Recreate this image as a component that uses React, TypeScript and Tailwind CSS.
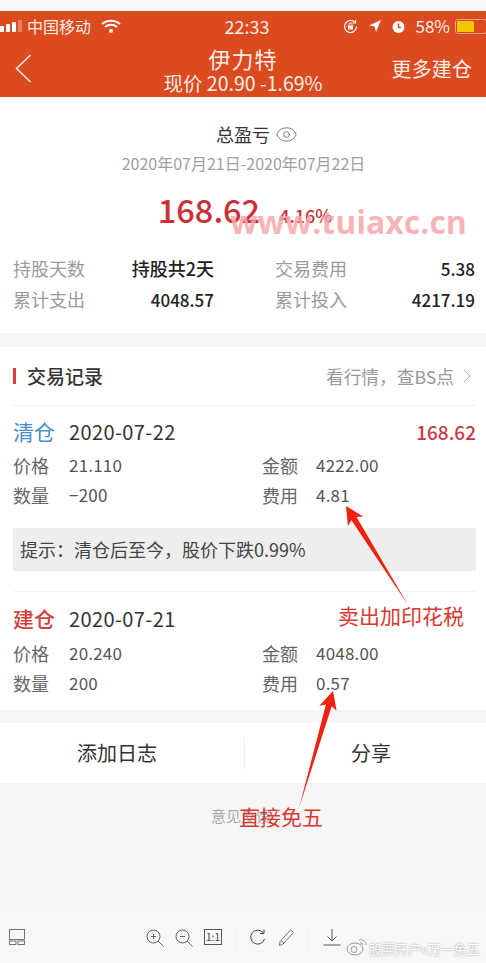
import React from "react";
import { Eye, ChevronRight } from "lucide-react";

const font = { fontFamily: '"Noto Sans CJK SC", "Noto Sans", sans-serif' };

function Stat({ label, value, valueClass = "text-[17px]" }: { label: string; value: string; valueClass?: string }) {
  return (
    <div className="flex items-center justify-between h-[31px]">
      <span className="text-[18px] text-[#9a9a9a]">{label}</span>
      <span className={`font-medium text-[#222] ${valueClass}`}>{value}</span>
    </div>
  );
}

function Cell({ label, value, labelClass }: { label: string; value: string; labelClass: string }) {
  return (
    <div className="flex items-center h-[30px]">
      <span className={`text-[18px] text-[#666] ${labelClass}`}>{label}</span>
      <span className="text-[17px] tracking-[0.2px] text-[#555]">{value}</span>
    </div>
  );
}

function Trade({ kind, kindClass, date, rows, profit, rowsClass = "" }: { kind: string; kindClass: string; date: string; rows: [string, string, string, string][]; profit?: string; rowsClass?: string }) {
  return (
    <div>
      <div className="flex items-center justify-between h-[36px]">
        <div className="flex items-center">
          <span className={`w-[56px] text-[21px] ${kindClass}`}>{kind}</span>
          <span className="text-[20px] tracking-[0.4px] text-[#333]">{date}</span>
        </div>
        {profit && <span className="text-[19px] font-medium text-[#c93a46]">{profit}</span>}
      </div>
      <div className={rowsClass}>
        {rows.map((r) => (
          <div key={r[0]} className="grid grid-cols-[249px_1fr]">
            <Cell label={r[0]} value={r[1]} labelClass="w-[56px]" />
            <Cell label={r[2]} value={r[3]} labelClass="w-[54px]" />
          </div>
        ))}
      </div>
    </div>
  );
}

function Arrow({ x1, y1, x2, y2 }: { x1: number; y1: number; x2: number; y2: number }) {
  const dx = x2 - x1, dy = y2 - y1;
  const len = Math.hypot(dx, dy);
  const ux = dx / len, uy = dy / len, px = -uy, py = ux;
  const hx = x2 - ux * 18, hy = y2 - uy * 18;
  const nx = x2 - ux * 15, ny = y2 - uy * 15;
  const pts = [
    [x1, y1],
    [nx + px * 3, ny + py * 3],
    [hx + px * 9, hy + py * 9],
    [x2, y2],
    [hx - px * 9, hy - py * 9],
    [nx - px * 3, ny - py * 3],
  ].map((p) => p.join(",")).join(" ");
  return <polygon points={pts} fill="#f0220f" />;
}

export default function App() {
  return (
    <div style={font} className="relative w-[486px] h-[963px] overflow-hidden bg-[#f6f6f6] flex flex-col">
      <div className="h-[11px] bg-[#f7f7f7] shrink-0" />
      <header className="h-[86px] shrink-0 bg-[#dc4a20] text-[#fbeee6] flex flex-col">
        <div className="h-[28px] flex items-center justify-between text-[16px] pt-[2px]">
          <div className="flex items-center">
            <div className="flex items-end gap-[2px] h-[12px]">
              <i className="w-[4px] h-[6px] bg-white block rounded-r-[1px]" />
              <i className="w-[4px] h-[8px] bg-white block rounded-[1px]" />
              <i className="w-[4px] h-[10px] bg-white block rounded-[1px]" />
              <i className="w-[4px] h-[12px] bg-white/30 block rounded-[1px]" />
            </div>
            <span className="ml-[5px]">中国移动</span>
            <svg className="ml-[10px]" width="20" height="14" viewBox="0 0 20 14" fill="none" stroke="#fff" strokeWidth="2">
              <path d="M1 5c5-4.500 13-4.500 18 0" />
              <path d="M4 8c3.500-3 8.500-3 12 0" />
              <circle cx="10" cy="12" r="1" fill="#fff" />
            </svg>
          </div>
          <span className="absolute left-0 w-[494px] text-center text-[18px] pointer-events-none">22:33</span>
          <div className="flex items-center">
            <svg width="15" height="15" viewBox="0 0 15 15" fill="none" stroke="#fff" strokeWidth="1.200">
              <path d="M13.500 7.500A6 6 0 1 1 11.500 3" />
              <path d="M12.500 1v3h-3" />
              <rect x="5" y="6.500" width="5" height="4" fill="#fff" stroke="none" />
              <path d="M6 6.500V5.500a1.500 1.500 0 0 1 3 0v1" strokeWidth="1" />
            </svg>
            <svg className="ml-[10px]" width="14" height="14" viewBox="0 0 14 14" fill="#fff"><path d="M13 1L1 6.500l5.500 1L8 13z" /></svg>
            <svg className="ml-[9px]" width="15" height="15" viewBox="0 0 15 15" fill="#fff">
              <circle cx="7.500" cy="8" r="6" />
              <path d="M7.500 4.500V8.500H10" stroke="#dc4a20" strokeWidth="1.500" fill="none" />
            </svg>
            <span className="ml-[9px] text-[17px]">58%</span>
            <div className="ml-[5px] w-[32px] h-[15px] border border-[#f3a48a] rounded-[3px] p-[1px] -mr-[1px]">
              <div className="w-[17px] h-full bg-[#f7c600] rounded-[1px]" />
            </div>
          </div>
        </div>
        <div className="relative flex-1 flex items-center justify-between">
          <svg className="ml-[15px]" width="17" height="29" viewBox="0 0 17 29" fill="none" stroke="#fbeee6" strokeWidth="1.500">
            <path d="M15.500 1L1.500 14.500L15.500 28" />
          </svg>
          <div className="absolute inset-x-0 top-[5px] flex flex-col items-center">
            <span className="text-[22px] leading-[28px] tracking-[1px]">伊力特</span>
            <span className="text-[19.500px] leading-[24px] mt-[-1px]">现价 20.90 -1.69%</span>
          </div>
          <span className="text-[20px] mr-[14px] mt-[2px] tracking-[0.1px]">更多建仓</span>
        </div>
      </header>

      <section className="h-[236px] shrink-0 bg-white flex flex-col pl-[13px] pr-[11px]">
        <div className="flex items-center justify-center gap-[5px] mt-[24px] h-[26px] text-[#333] text-[18px] ml-[26px]">
          <span>总盈亏</span>
          <Eye size={23} strokeWidth={1} className="text-[#777]" />
        </div>
        <div className="text-center text-[16px] text-[#a0a0a0] mt-[5px] h-[22px] leading-[22px] mr-[1px]">2020年07月21日-2020年07月22日</div>
        <div className="flex items-baseline justify-center mt-[13px] h-[44px] text-[#cc3036] relative">
          <span className="text-[32.500px] leading-[44px] font-medium ml-[2px]">168.62</span>
          <span className="text-[18px] font-medium ml-[19px]">4.16%</span>
          <span className="absolute left-[217px] top-[13px] text-[32px] leading-[44px] font-bold text-[#f5a7ad]/85 whitespace-nowrap" style={{ fontFamily: '"Open Sans", sans-serif' }}>www.tuiaxc.cn</span>
        </div>
        <div className="grid grid-cols-[201px_200px] justify-between mt-[22px]">
          <Stat label="持股天数" value="持股共2天" valueClass="text-[18px]" />
          <Stat label="交易费用" value="5.38" />
          <Stat label="累计支出" value="4048.57" />
          <Stat label="累计投入" value="4217.19" />
        </div>
      </section>

      <div className="h-[14px] shrink-0" />

      <section className="h-[363px] shrink-0 bg-white pl-[13px] pr-[10px]">
        <div className="h-[59px] flex items-center justify-between border-b border-[#f1f1f1]">
          <div className="flex items-center">
            <i className="block w-[3px] h-[16px] bg-[#d9403f]" />
            <span className="ml-[11px] text-[19px] font-medium text-[#333]">交易记录</span>
          </div>
          <div className="flex items-center text-[17.700px] text-[#999]">
            <span>看行情，查BS点</span>
            <ChevronRight size={24} strokeWidth={1} className="text-[#aaa] -mr-[3px] ml-[1px]" />
          </div>
        </div>
        <div className="pt-[8px]">
          <Trade kind="清仓" kindClass="text-[#4a8fc7]" date="2020-07-22" profit="168.62"
            rows={[["价格", "21.110", "金额", "4222.00"], ["数量", "−200", "费用", "4.81"]]} />
        </div>
        <div className="mt-[18px] h-[43px] bg-[#eeeeee] flex items-center px-[7px] text-[18px] text-[#444]">提示：清仓后至今，股价下跌0.99%</div>
        <div className="mt-[20px] border-t border-[#f4f4f4] pt-[9px]">
          <Trade kind="建仓" kindClass="text-[#d33f40] font-medium" date="2020-07-21" rowsClass="pt-[1px]"
            rows={[["价格", "20.240", "金额", "4048.00"], ["数量", "200", "费用", "0.57"]]} />
        </div>
      </section>

      <div className="h-[13px] shrink-0" />

      <section className="h-[60px] shrink-0 bg-white flex items-center">
        <div className="w-[245px] h-[32px] flex items-center justify-center border-r border-[#eeeeee] text-[20px] text-[#333] pr-[10px]">添加日志</div>
        <div className="flex-1 flex items-center justify-center text-[20px] text-[#333] pl-[11px]">分享</div>
      </section>

      <div className="mt-[22px] ml-[211px] text-[15px] text-[#aaaaaa] leading-[22px]">意见反馈</div>

      <footer className="absolute left-0 right-0 bottom-0 h-[53px] bg-[#f7f7f7] flex items-start pt-[19px] text-[#555]">
        <svg className="ml-[9px]" width="16" height="16" viewBox="0 0 16 16" fill="none" stroke="#666" strokeWidth="0.900">
          <rect x="0.500" y="0.500" width="15" height="10" />
          <rect x="0.500" y="12" width="6.500" height="3.500" />
          <rect x="9" y="12" width="6.500" height="3.500" />
        </svg>
        <svg className="ml-[121px]" width="18" height="18" viewBox="0 0 18 18" fill="none" stroke="#555" strokeWidth="0.900">
          <circle cx="7.500" cy="7.500" r="6.500" /><path d="M12 12l5.500 5.500M5 7.500h5M7.500 5v5" />
        </svg>
        <svg className="ml-[11px]" width="18" height="18" viewBox="0 0 18 18" fill="none" stroke="#555" strokeWidth="0.900">
          <circle cx="7.500" cy="7.500" r="6.500" /><path d="M12 12l5.500 5.500M5 7.500h5" />
        </svg>
        <div className="ml-[11px] w-[18px] h-[16px] border border-[#555] text-[10px] leading-[14px] text-center text-[#444]">1:1</div>
        <i className="block ml-[13px] w-px h-[22px] bg-[#f0f0f0]" />
        <svg className="ml-[13px]" width="17" height="17" viewBox="0 0 17 17" fill="none" stroke="#444" strokeWidth="1">
          <path d="M14 3.500A7 7 0 1 0 15.500 10" /><path d="M15 0.500v4h-4" />
        </svg>
        <svg className="ml-[13px]" width="16" height="17" viewBox="0 0 16 17" fill="none" stroke="#666" strokeWidth="0.900">
          <path d="M1 12.500L11.500 1l3 2.500L4 15l-3.500 1.500z" /><path d="M2 11.500l3 2.500" />
        </svg>
        <i className="block ml-[13px] w-px h-[22px] bg-[#f0f0f0]" />
        <svg className="ml-[14px]" width="18" height="17" viewBox="0 0 18 17" fill="none" stroke="#444" strokeWidth="0.900">
          <path d="M9 0v11.500M4.500 7.500L9 12l4.500-4.500M0.500 16h17" />
        </svg>
      </footer>

      <span className="absolute left-[369px] top-[939px] text-[13px] leading-[20px] text-white [text-shadow:0_0_2px_#888] whitespace-nowrap">股票开户v万一免五</span>
      <svg className="absolute left-[346px] top-[938px]" width="22" height="18" viewBox="0 0 22 18" fill="none" stroke="#999" strokeWidth="1">
        <ellipse cx="9" cy="11" rx="8" ry="6" />
        <circle cx="8" cy="11.500" r="3" />
        <path d="M13 2c3-1 7 1 7 5M14 5c2-.5 3 .5 3 2" />
      </svg>

      <svg className="absolute inset-0 pointer-events-none" width="486" height="963">
        <Arrow x1={408} y1={605} x2={346} y2={506} />
        <Arrow x1={299} y1={808} x2={333} y2={691} />
      </svg>
      <span className="absolute left-[338px] top-[601px] text-[21px] leading-[28px] text-[#d9392f] whitespace-nowrap">卖出加印花税</span>
      <span className="absolute left-[239px] top-[802px] text-[21px] leading-[28px] text-[#d9392f] whitespace-nowrap">直接免五</span>
    </div>
  );
}
